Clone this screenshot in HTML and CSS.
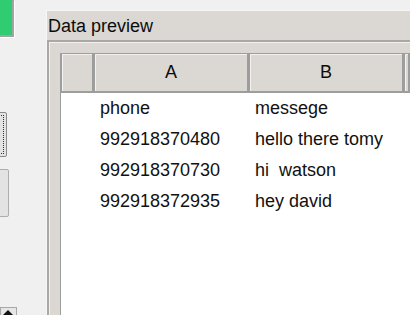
FILE: index.html
```html
<!DOCTYPE html>
<html>
<head>
    <meta charset="UTF-8">
    <title>Data preview</title>
    <link rel="stylesheet" href="styles.css">
</head>
<body>
    <div class="app">
        <div class="side">
            <div class="btn-green"></div>
            <div class="btn btn-focus"><span></span></div>
            <div class="btn btn-plain"></div>
            <div class="spacer"></div>
            <div class="btn-arrow"><span class="tri"></span></div>
        </div>

        <div class="panel">
            <div class="panel-title">Data preview</div>
            <div class="frame">
                <div class="grid">
                    <div class="hcell"></div>
                    <div class="hcell">A</div>
                    <div class="hcell">B</div>
                    <div class="hcell"></div>

                    <div class="cell"></div>
                    <div class="cell">phone</div>
                    <div class="cell">messege</div>
                    <div class="cell"></div>

                    <div class="cell"></div>
                    <div class="cell">992918370480</div>
                    <div class="cell">hello there tomy</div>
                    <div class="cell"></div>

                    <div class="cell"></div>
                    <div class="cell">992918370730</div>
                    <div class="cell">hi&nbsp; watson</div>
                    <div class="cell"></div>

                    <div class="cell"></div>
                    <div class="cell">992918372935</div>
                    <div class="cell">hey david</div>
                    <div class="cell"></div>
                </div>
            </div>
        </div>
    </div>
</body>
</html>
```

FILE: styles.css
```css
html, body {
    margin: 0;
    padding: 0;
}
body {
    width: 410px;
    height: 315px;
    overflow: hidden;
    background: #f0f0f0;
    font-family: "Liberation Sans", Arial, sans-serif;
    color: #111;
}
.app {
    display: flex;
    height: 315px;
}

/* left column of cut-off buttons */
.side {
    width: 46px;
    flex: none;
    display: flex;
    flex-direction: column;
    align-items: flex-start;
}
.btn-green {
    width: 12px;
    height: 35px;
    background: #2fcc72;
    border-right: 2px solid #a3a3a3;
    border-bottom: 2px solid #a3a3a3;
    box-shadow: 1px 1px 0 #ffffff;
}
.btn {
    margin-left: -6px;
    width: 13px;
    background: #e3e3e3;
    border: 1px solid #adadad;
    border-radius: 2px;
}
.btn-focus {
    margin-top: 75px;
    height: 45px;
    border-color: #8a8a8a;
    display: flex;
    padding: 2px;
    box-sizing: border-box;
}
.btn-focus span {
    flex: 1;
    border: 1px dotted #333;
}
.btn-plain {
    margin-top: 12px;
    height: 46px;
}
.spacer {
    flex: 1;
}
.btn-arrow {
    width: 15px;
    height: 10px;
    margin-bottom: -4px;
    background: #e6e6e6;
    border: 1px solid #a8a8a8;
    position: relative;
    overflow: hidden;
}
.tri {
    position: absolute;
    left: 0;
    top: 2px;
    border-left: 7px solid transparent;
    border-right: 7px solid transparent;
    border-bottom: 7px solid #111;
}

/* data preview panel */
.panel {
    flex: 1;
    margin-top: 10px;
    background: #dbd8d3;
    border-top: 1px solid #f7f7f7;
    border-left: 1px solid #f7f7f7;
    display: flex;
    flex-direction: column;
    min-width: 0;
}
.panel-title {
    height: 29px;
    padding-left: 1px;
    font-size: 18px;
    line-height: 30px;
    color: #0c0c0c;
}
.frame {
    flex: 1;
    border-top: 2px solid #aaa8a4;
    border-left: 2px solid #aaa8a4;
    box-shadow: inset 1px 1px 0 #f2f1ef;
    padding: 11px 0 0 11px;
    display: flex;
    min-height: 0;
}
.grid {
    flex: 1;
    background: #ffffff;
    border-left: 1px solid #9e9e9e;
    display: grid;
    grid-template-columns: 33px 155px 155px 1fr;
    grid-template-rows: 40px repeat(4, 31px);
    align-content: start;
    overflow: hidden;
}
.hcell {
    background: #dbd8d3;
    border: 1px solid #9d9d9d;
    border-width: 1px 2px 2px 1px;
    box-shadow: inset 1px 1px 0 #f3f2f0;
    font-size: 18px;
    display: flex;
    align-items: center;
    justify-content: center;
    color: #0c0c0c;
}
.cell {
    font-size: 18px;
    display: flex;
    align-items: center;
    padding-left: 6px;
    white-space: nowrap;
}
```
